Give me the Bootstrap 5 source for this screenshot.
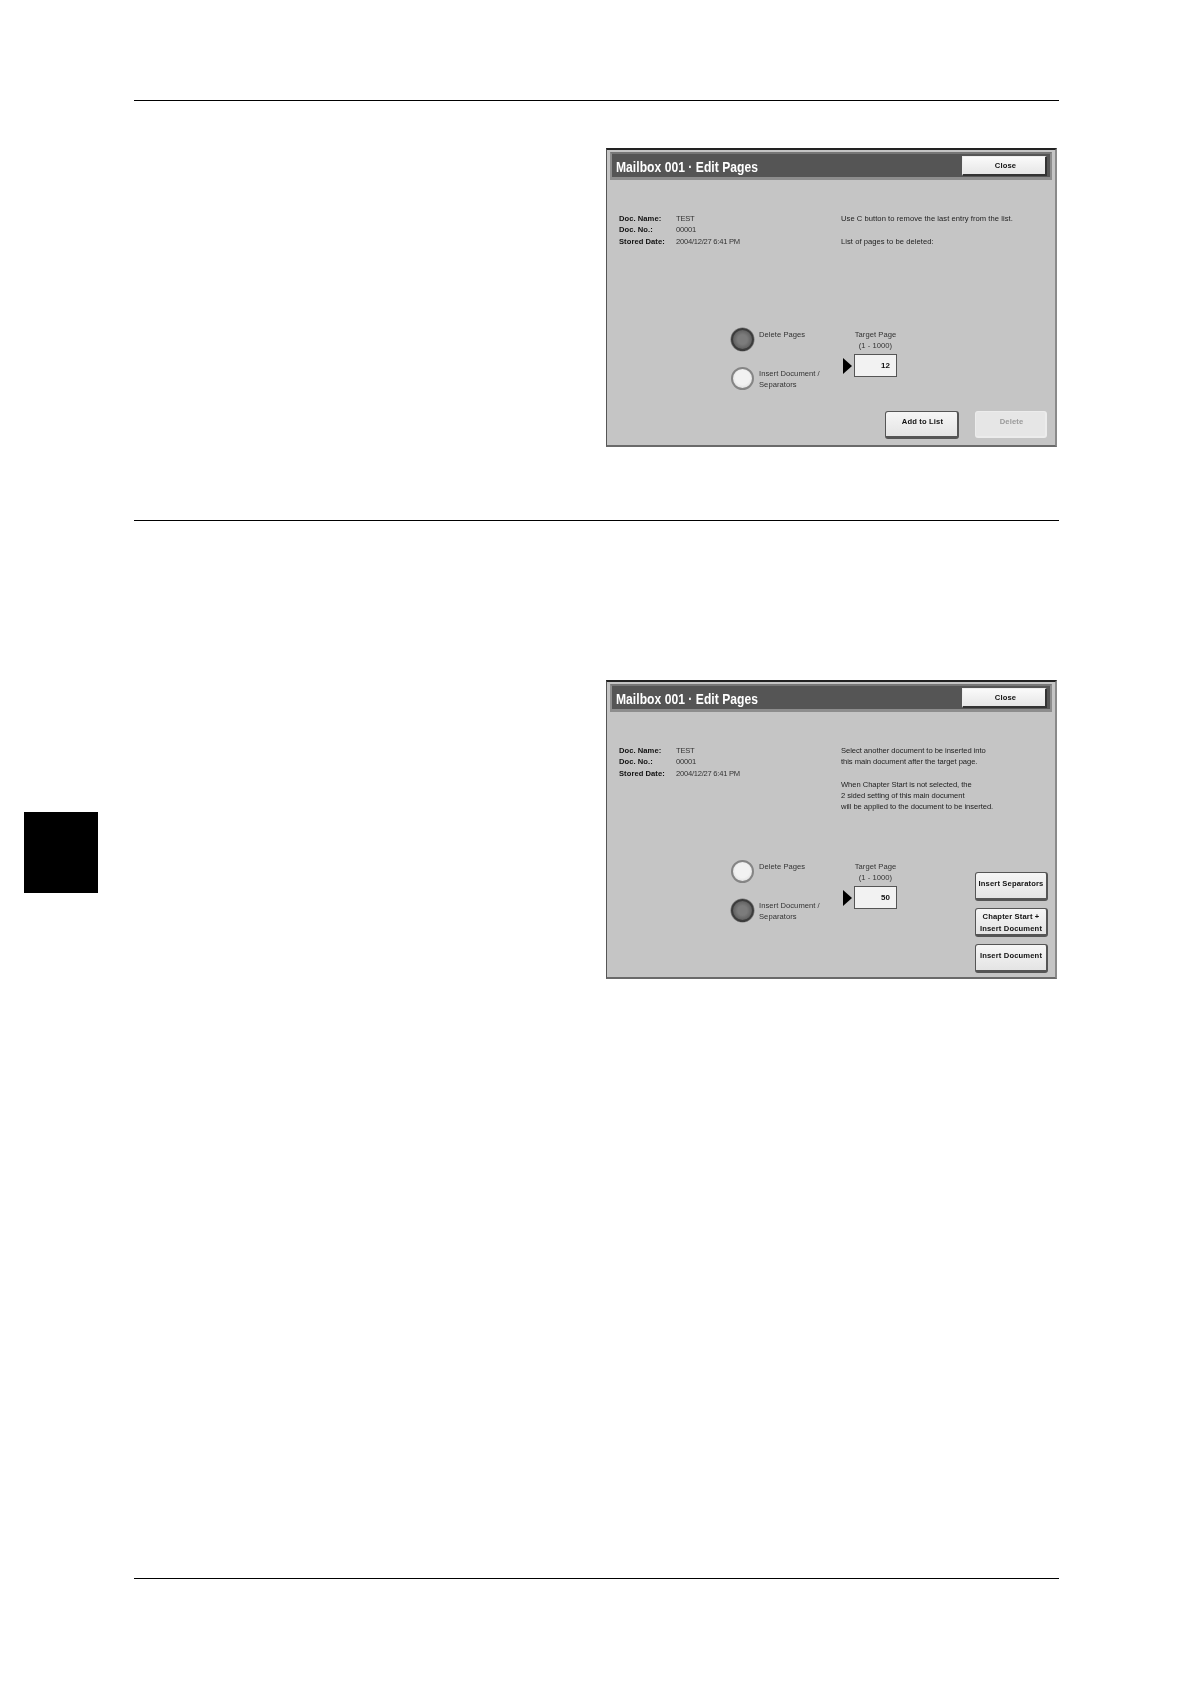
<!DOCTYPE html>
<html lang="en">
<head>
<meta charset="utf-8">
<title>Mailbox 001 - Edit Pages</title>
<link href="https://cdn.jsdelivr.net/npm/bootstrap@5.3.0/dist/css/bootstrap.min.css" rel="stylesheet">
<style>
body{background:#fff;margin:0;font-family:"Liberation Sans",Arial,sans-serif;color:#222}
.sheet{width:1190px;height:1684px}
.rail{width:134px;padding-left:24px;padding-top:812px;flex:none}
.tab-block{width:74px;height:81px;background:#000}
.main-col{width:925px;padding-top:100px}
.rule{margin:0;border:0;border-top:1.3px solid #000;opacity:1;height:0}
.rule-top{margin-bottom:47px}
.rule-mid{margin-top:73px;margin-bottom:159px}
.rule-bot{margin-top:599px}
.panel-ui{margin-left:472px;width:451px;height:299px;background:#c5c5c5;border-style:solid;border-color:#222 #8a8a8a #6a6a6a #555;border-width:2px 2px 2px 1px;font-size:7.6px;line-height:11.25px;filter:blur(.4px);letter-spacing:.05px}
.title-bar{margin:2px 3px 0 3px;height:28px;background:#555;border:2px solid #8d8d8d;border-top-color:#777;border-bottom-width:3px;padding:0 3px 0 4px}
.title-txt{font-family:"Liberation Sans",Arial,sans-serif;font-weight:700;font-size:15.5px;color:#fff;margin:0;padding-top:3px;line-height:1;transform:scaleX(.78);transform-origin:left center;white-space:nowrap}
.btn.uibtn{--bs-btn-padding-x:0;--bs-btn-padding-y:0;font-family:"Liberation Sans",Arial,sans-serif;font-weight:700;font-size:7.6px;line-height:11.5px;letter-spacing:.15px;color:#111;background:linear-gradient(#f6f6f6,#e4e4e4);border:1px solid #666;border-right-width:2px;border-bottom-width:2px;border-radius:3px;padding:0 0 4px;text-align:center;display:block;flex:none}
.btn.close-ui{width:85px;height:20px;border-color:#eee #333 #333 #eee;border-radius:0;padding:2px 0 0 3px;background:linear-gradient(#fafafa,#e6e6e6)}
.btn.add-ui{width:74px;height:28px;border-color:#555;border-right-width:2px;border-bottom-width:3px;padding-left:2px}
.btn.del-ui{width:72px;height:27px;background:#e6e6e6;color:#9a9a9a;border-color:#ececec;opacity:1;padding-left:2px}
.btn.side-ui{width:73px;height:29px;border-color:#555;border-bottom-width:3px;padding-bottom:3px}
.btn.two-line{padding:2.5px 0 0;line-height:11.5px}
.info-area{height:147px;padding:33px 0 0 12px}
.info-left{width:222px;flex:none}
.lbl{font-weight:700;width:57px;flex:none;color:#111}
.val{letter-spacing:-.25px;color:#333}
.msg-tight{letter-spacing:-.05px}
.controls{padding-left:124px;height:84px}
.radio-col{width:112px;flex:none}
.radio-item{height:39px;gap:5px}
.radio-dot{width:23px;height:23px;margin-top:1px;border-radius:50%;flex:none;border:2px solid #858585;background:radial-gradient(circle at 50% 45%,#f2f2f2 50%,#d2d2d2 100%)}
.radio-dot.on{border-color:#3c3c3c;background:radial-gradient(circle at 50% 50%,#7c7c7c 35%,#4a4a4a 100%);box-shadow:0 0 0 .5px #777}
.radio-lbl{padding-top:1.5px;color:#333}
.target-col{padding-top:1.5px;width:54px;flex:none}
.target-hd{margin-left:11px;width:43px;text-align:center;white-space:nowrap;color:#333;margin-bottom:3px}
.arrow-ui{width:0;height:0;border-style:solid;border-width:8px 0 8px 9px;border-color:transparent transparent transparent #000;margin-right:2px;flex:none}
.num-box{width:43px;height:23px;background:#f2f2f2;border:1px solid #555;font-weight:700;font-size:8px;line-height:21px;text-align:right;padding-right:6px;color:#111}
.footer-ui{padding-right:8px;gap:16px}
.side-col{margin-left:auto;padding-right:7px;padding-top:12.5px;gap:7px}
</style>
</head>
<body>
<div class="sheet d-flex">
  <div class="rail"><div class="tab-block"></div></div>
  <main class="main-col">
    <hr class="rule rule-top">

    <section class="panel-ui">
      <div class="title-bar d-flex align-items-center justify-content-between">
        <h2 class="title-txt">Mailbox 001 · Edit Pages</h2>
        <button type="button" class="btn uibtn close-ui">Close</button>
      </div>
      <div class="info-area d-flex">
        <div class="info-left">
          <div class="d-flex"><span class="lbl">Doc. Name:</span><span class="val">TEST</span></div>
          <div class="d-flex"><span class="lbl">Doc. No.:</span><span class="val">00001</span></div>
          <div class="d-flex"><span class="lbl">Stored Date:</span><span class="val">2004/12/27 6:41 PM</span></div>
        </div>
        <div>Use C button to remove the last entry from the list.<br><br>List of pages to be deleted:</div>
      </div>
      <div class="controls d-flex">
        <div class="radio-col">
          <div class="radio-item d-flex"><span class="radio-dot on"></span><span class="radio-lbl">Delete Pages</span></div>
          <div class="radio-item d-flex"><span class="radio-dot"></span><span class="radio-lbl">Insert Document /<br>Separators</span></div>
        </div>
        <div class="target-col">
          <div class="target-hd">Target Page<br>(1 - 1000)</div>
          <div class="d-flex align-items-center"><span class="arrow-ui"></span><div class="num-box">12</div></div>
        </div>
      </div>
      <div class="footer-ui d-flex justify-content-end">
        <button type="button" class="btn uibtn add-ui">Add to List</button>
        <button type="button" class="btn uibtn del-ui">Delete</button>
      </div>
    </section>

    <hr class="rule rule-mid">

    <section class="panel-ui">
      <div class="title-bar d-flex align-items-center justify-content-between">
        <h2 class="title-txt">Mailbox 001 · Edit Pages</h2>
        <button type="button" class="btn uibtn close-ui">Close</button>
      </div>
      <div class="info-area d-flex">
        <div class="info-left">
          <div class="d-flex"><span class="lbl">Doc. Name:</span><span class="val">TEST</span></div>
          <div class="d-flex"><span class="lbl">Doc. No.:</span><span class="val">00001</span></div>
          <div class="d-flex"><span class="lbl">Stored Date:</span><span class="val">2004/12/27 6:41 PM</span></div>
        </div>
        <div class="msg-tight">Select another document to be inserted into<br>this main document after the target page.<br><br>When Chapter Start is not selected, the<br>2 sided setting of this main document<br>will be applied to the document to be inserted.</div>
      </div>
      <div class="controls d-flex">
        <div class="radio-col">
          <div class="radio-item d-flex"><span class="radio-dot"></span><span class="radio-lbl">Delete Pages</span></div>
          <div class="radio-item d-flex"><span class="radio-dot on"></span><span class="radio-lbl">Insert Document /<br>Separators</span></div>
        </div>
        <div class="target-col">
          <div class="target-hd">Target Page<br>(1 - 1000)</div>
          <div class="d-flex align-items-center"><span class="arrow-ui"></span><div class="num-box">50</div></div>
        </div>
        <div class="side-col d-flex flex-column">
          <button type="button" class="btn uibtn side-ui">Insert Separators</button>
          <button type="button" class="btn uibtn side-ui two-line">Chapter Start +<br>Insert Document</button>
          <button type="button" class="btn uibtn side-ui">Insert Document</button>
        </div>
      </div>
    </section>

    <hr class="rule rule-bot">
  </main>
</div>
<script src="https://cdn.jsdelivr.net/npm/bootstrap@5.3.0/dist/js/bootstrap.bundle.min.js"></script>
</body>
</html>
